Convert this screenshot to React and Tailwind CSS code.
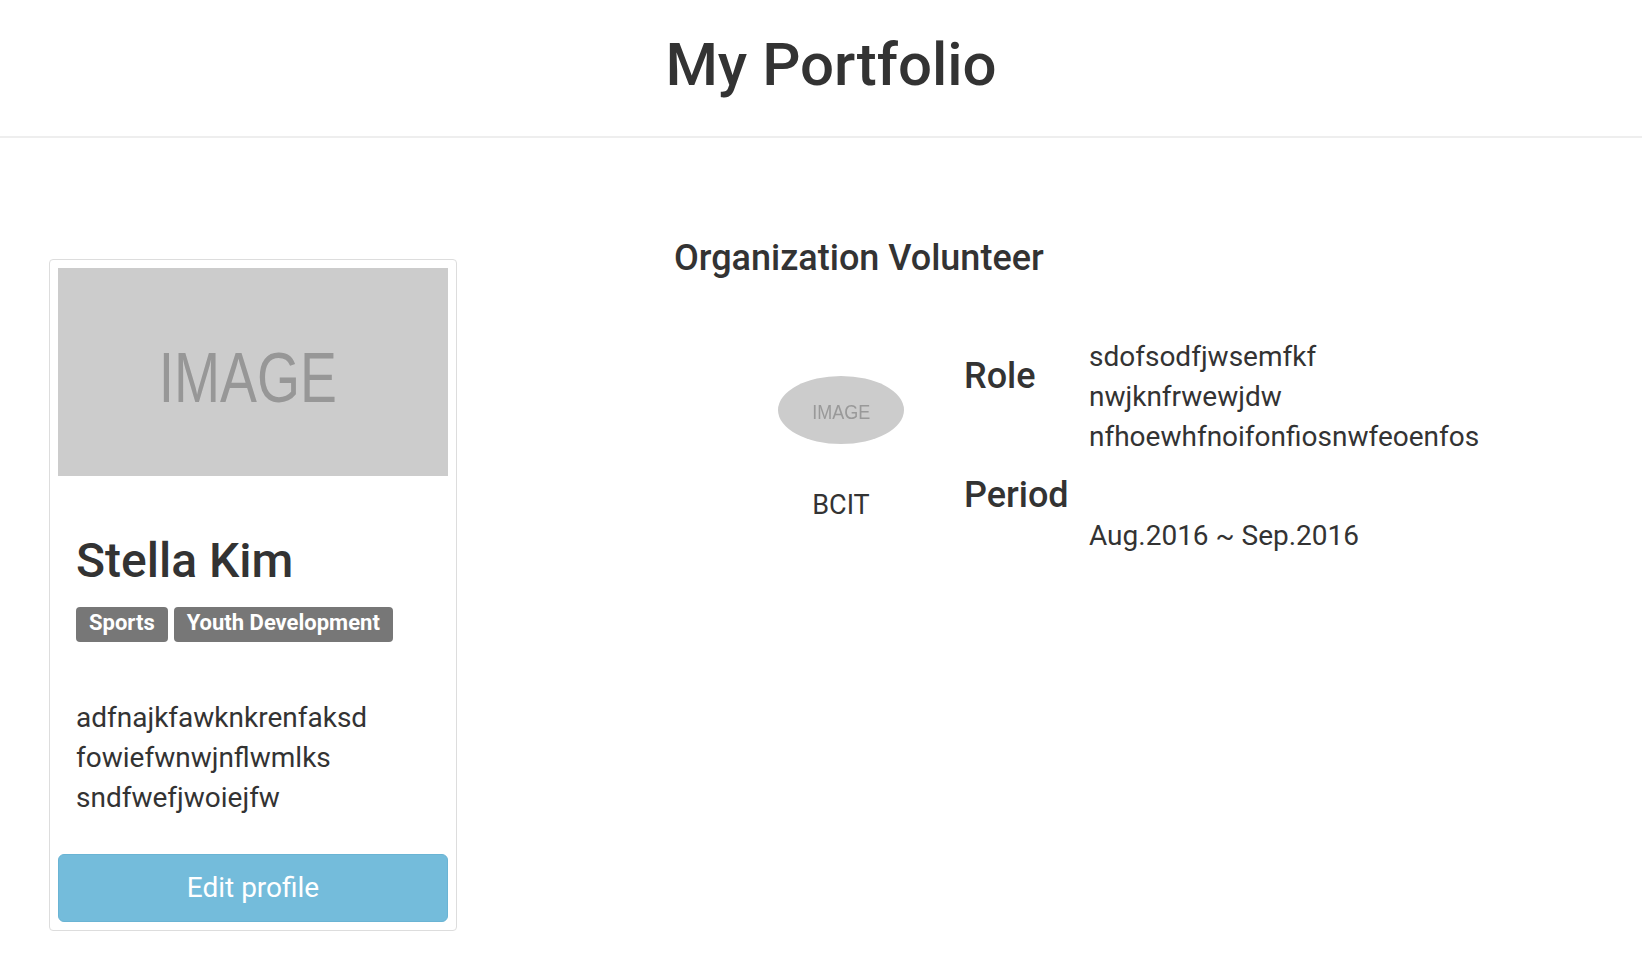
const roleLines = ["sdofsodfjwsemfkf", "nwjknfrwewjdw", "nfhoewhfnoifonfiosnwfeoenfos"];
const bioLines = ["adfnajkfawknkrenfaksd", "fowiefwnwjnflwmlks", "sndfwefjwoiejfw"];
const tags = ["Sports", "Youth Development"];

const ProfileCard = () => {
  return (
    <div className="w-[408px] shrink-0 border border-[#ddd] rounded-[4px] p-[8px] bg-white">
      <div className="h-[208px] bg-[#cccccc] flex items-center justify-center pr-[10px] pt-[12px] overflow-hidden">
        <span className="text-[70px] leading-none text-[#979797] scale-x-[0.79] blur-[0.4px] [font-family:'Liberation_Sans',Arial,sans-serif]">
          IMAGE
        </span>
      </div>
      <div className="px-[18px]">
        <h2 className="mt-[58px] text-[48px] leading-[53px] font-medium text-[#333]">Stella Kim</h2>
        <div className="flex gap-[6px] mt-[20px]">
          {tags.map((tag) => (
            <span
              key={tag}
              className="h-[35px] px-[13px] pt-[3px] leading-[26px] text-[22px] font-bold text-white bg-[#777] rounded-[4px]"
            >
              {tag}
            </span>
          ))}
        </div>
        <p className="mt-[56px] text-[28px] leading-[40px] text-[#333]">
          {bioLines.map((line) => (
            <span key={line} className="block">
              {line}
            </span>
          ))}
        </p>
      </div>
      <button className="mt-[36px] w-full h-[68px] rounded-[6px] bg-[#74bcdb] border border-[#6ab4d4] text-white text-[28px] leading-none">
        Edit profile
      </button>
    </div>
  );
};

const Experience = () => {
  return (
    <div className="ml-[217px] pt-[99px]">
      <h3 className="text-[36px] leading-[42px] font-medium text-[#333]">Organization Volunteer</h3>
      <div className="flex mt-[58px]">
        <div className="ml-[104px] w-[126px] flex flex-col items-center">
          <div className="mt-[39px] w-[126px] h-[68px] rounded-[50%] bg-[#cccccc] flex items-center justify-center pt-[4px]">
            <span className="text-[20px] leading-none text-[#999] scale-x-90 [font-family:'Liberation_Sans',Arial,sans-serif]">
              IMAGE
            </span>
          </div>
          <div className="mt-[45px] text-[27px] leading-[32px] text-[#333]">BCIT</div>
        </div>
        <div className="ml-[60px] w-[125px] flex flex-col">
          <div className="mt-[18px] text-[36px] leading-[42px] font-medium text-[#333]">Role</div>
          <div className="mt-[77px] text-[36px] leading-[42px] font-medium text-[#333]">Period</div>
        </div>
        <div className="flex flex-col text-[28px] leading-[40px] text-[#333]">
          {roleLines.map((line) => (
            <span key={line}>{line}</span>
          ))}
          <span className="mt-[59px]">Aug.2016 ~ Sep.2016</span>
        </div>
      </div>
    </div>
  );
};

export default function App() {
  return (
    <div className="min-h-[960px] bg-white text-[#333] [font-family:Roboto,'Noto_Sans',sans-serif]">
      <header className="pt-[32px] pb-[38px] pl-[20px] border-b-2 border-[#eeeeee]">
        <h1 className="text-center text-[60px] leading-[66px] font-medium text-[#333]">My Portfolio</h1>
      </header>
      <main className="flex items-start pl-[49px]">
        <div className="pt-[121px]">
          <ProfileCard />
        </div>
        <Experience />
      </main>
    </div>
  );
}
